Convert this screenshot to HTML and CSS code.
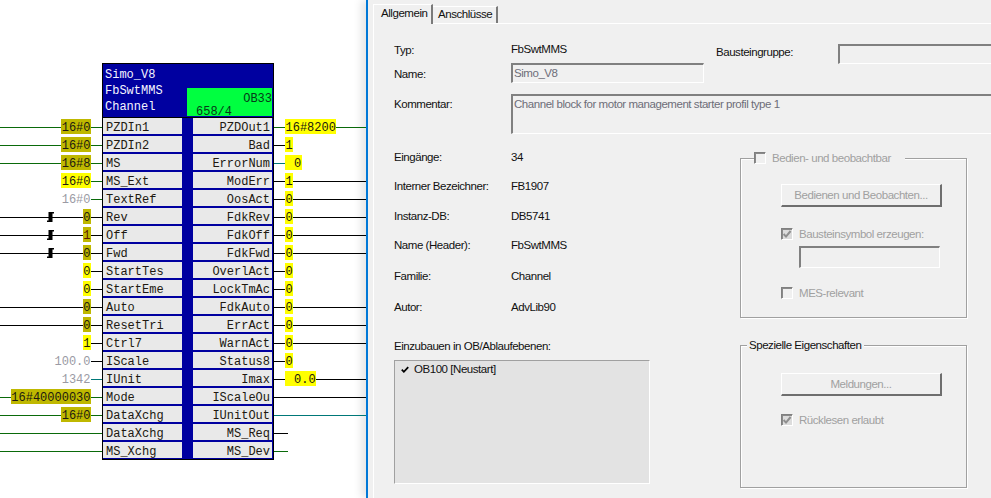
FILE: index.html
```html
<!DOCTYPE html>
<html lang="de">
<head>
<meta charset="utf-8">
<title>FbSwtMMS</title>
<link rel="stylesheet" href="styles.css">
</head>
<body>
<div class="page">
  <section class="diagram">
    <div class="pins pins-in">
      <div class="pin full green"><span class="tag olive">16#0</span></div>
      <div class="pin full green"><span class="tag olive">16#0</span></div>
      <div class="pin full green"><span class="tag olive">16#8</span></div>
      <div class="pin stub green"><span class="tag yellow">16#0</span></div>
      <div class="pin stub green"><span class="tag grey">16#0</span></div>
      <div class="pin full black"><svg class="mark" viewBox="0 0 7 10"><path d="M0 10V8.5H1.5V0H7V1.5H5.5V10Z"/></svg><span class="tag olive">0</span></div>
      <div class="pin full black"><svg class="mark" viewBox="0 0 7 10"><path d="M0 10V8.5H1.5V0H7V1.5H5.5V10Z"/></svg><span class="tag olive red">1</span></div>
      <div class="pin full black"><svg class="mark" viewBox="0 0 7 10"><path d="M0 10V8.5H1.5V0H7V1.5H5.5V10Z"/></svg><span class="tag olive">0</span></div>
      <div class="pin stub black"><span class="tag yellow">0</span></div>
      <div class="pin stub black"><span class="tag yellow">0</span></div>
      <div class="pin full black"><span class="tag olive">0</span></div>
      <div class="pin full black"><span class="tag olive">0</span></div>
      <div class="pin stub black"><span class="tag yellow">1</span></div>
      <div class="pin stub black"><span class="tag grey">100.0</span></div>
      <div class="pin stub teal"><span class="tag grey">1342</span></div>
      <div class="pin full green"><span class="tag olive">16#40000030</span></div>
      <div class="pin full green"><span class="tag olive">16#0</span></div>
      <div class="pin full green"></div>
      <div class="pin full green"></div>
    </div>

    <div class="block">
      <header class="block-head">
        <div class="block-title">
          <div>Simo_V8</div>
          <div>FbSwtMMS</div>
          <div>Channel</div>
        </div>
        <div class="block-run">
          <div class="run-ob">OB33</div>
          <div class="run-seq">658/4</div>
        </div>
      </header>
      <div class="block-body">
        <div class="cell">PZDIn1</div><div class="cell right">PZDOut1</div>
        <div class="cell">PZDIn2</div><div class="cell right">Bad</div>
        <div class="cell">MS</div><div class="cell right">ErrorNum</div>
        <div class="cell">MS_Ext</div><div class="cell right">ModErr</div>
        <div class="cell">TextRef</div><div class="cell right">OosAct</div>
        <div class="cell">Rev</div><div class="cell right">FdkRev</div>
        <div class="cell">Off</div><div class="cell right">FdkOff</div>
        <div class="cell">Fwd</div><div class="cell right">FdkFwd</div>
        <div class="cell">StartTes</div><div class="cell right">OverlAct</div>
        <div class="cell">StartEme</div><div class="cell right">LockTmAc</div>
        <div class="cell">Auto</div><div class="cell right">FdkAuto</div>
        <div class="cell">ResetTri</div><div class="cell right">ErrAct</div>
        <div class="cell">Ctrl7</div><div class="cell right">WarnAct</div>
        <div class="cell">IScale</div><div class="cell right">Status8</div>
        <div class="cell">IUnit</div><div class="cell right">Imax</div>
        <div class="cell">Mode</div><div class="cell right">IScaleOu</div>
        <div class="cell">DataXchg</div><div class="cell right">IUnitOut</div>
        <div class="cell">DataXchg</div><div class="cell right">MS_Req</div>
        <div class="cell">MS_Xchg</div><div class="cell right">MS_Dev</div>
      </div>
    </div>

    <div class="pins pins-out">
      <div class="pin full green"><span class="tag yellow">16#8200</span></div>
      <div class="pin stub black"><span class="tag yellow">1</span></div>
      <div class="pin stub teal"><span class="tag yellow indent">0</span></div>
      <div class="pin full black"><span class="tag yellow">1</span></div>
      <div class="pin full black"><span class="tag yellow">0</span></div>
      <div class="pin full black"><span class="tag yellow">0</span></div>
      <div class="pin full black"><span class="tag yellow">0</span></div>
      <div class="pin full black"><span class="tag yellow">0</span></div>
      <div class="pin stub black"><span class="tag yellow">0</span></div>
      <div class="pin stub black"><span class="tag yellow">0</span></div>
      <div class="pin full black"><span class="tag yellow">0</span></div>
      <div class="pin full black"><span class="tag yellow">0</span></div>
      <div class="pin full black"><span class="tag yellow">0</span></div>
      <div class="pin stub black"><span class="tag yellow">0</span></div>
      <div class="pin full black"><span class="tag yellow indent">0.0</span></div>
      <div class="pin full black"></div>
      <div class="pin full teal"></div>
      <div class="pin stub long black"></div>
      <div class="pin stub long green"></div>
    </div>
  </section>

  <section class="dialog">
    <nav class="tabs">
      <div class="tab active">Allgemein</div>
      <div class="tab">Anschlüsse</div>
    </nav>
    <div class="panel">
      <div class="head-grid">
        <div class="label">Typ:</div>
        <div class="value type-value">FbSwtMMS</div>
        <div class="label group-label">Bausteingruppe:</div>
        <div class="input group-input"></div>
        <div class="label name-label">Name:</div>
        <div class="input name-input">Simo_V8</div>
        <div class="label comment-label">Kommentar:</div>
        <div class="input comment-input">Channel block for motor management starter profil type 1</div>
      </div>

      <div class="lower">
        <div class="left-col">
          <div class="info-grid">
            <div class="label">Eingänge:</div><div class="value">34</div>
            <div class="label">Interner Bezeichner:</div><div class="value">FB1907</div>
            <div class="label">Instanz-DB:</div><div class="value">DB5741</div>
            <div class="label">Name (Header):</div><div class="value">FbSwtMMS</div>
            <div class="label">Familie:</div><div class="value">Channel</div>
            <div class="label">Autor:</div><div class="value">AdvLib90</div>
          </div>
          <div class="label list-label">Einzubauen in OB/Ablaufebenen:</div>
          <div class="listbox">
            <div class="list-item">
              <svg class="list-tick" viewBox="0 0 9 8"><path d="M0.8 4.2 3.2 6.6 8.2 1.2" fill="none" stroke="#000" stroke-width="2"/></svg>
              <span>OB100 [Neustart]</span>
            </div>
          </div>
        </div>

        <div class="right-col">
          <div class="groupbox box-operate">
            <div class="legend legend-check">
              <span class="check"></span>
              <span class="disabled">Bedien- und beobachtbar</span>
            </div>
            <div class="group-content">
              <div class="button">Bedienen und Beobachten...</div>
              <div class="check-row row-symbol">
                <span class="check on"><svg viewBox="0 0 10 10"><path d="M1.6 5 4 7.6 8.6 2" fill="none" stroke="#8f8f8f" stroke-width="2"/></svg></span>
                <span class="disabled">Bausteinsymbol erzeugen:</span>
              </div>
              <div class="input symbol-input"></div>
              <div class="check-row row-mes">
                <span class="check"></span>
                <span class="disabled">MES-relevant</span>
              </div>
            </div>
          </div>

          <div class="groupbox box-special">
            <div class="legend legend-text">Spezielle Eigenschaften</div>
            <div class="group-content">
              <div class="button">Meldungen...</div>
              <div class="check-row row-read">
                <span class="check on"><svg viewBox="0 0 10 10"><path d="M1.6 5 4 7.6 8.6 2" fill="none" stroke="#8f8f8f" stroke-width="2"/></svg></span>
                <span class="disabled">Rücklesen erlaubt</span>
              </div>
            </div>
          </div>
        </div>
      </div>
    </div>
  </section>
</div>
</body>
</html>
```

FILE: styles.css
```css
* { box-sizing: border-box; }

html, body {
  margin: 0;
  height: 498px;
  overflow: hidden;
  background: #fff;
}

.page {
  display: flex;
  width: 991px;
  height: 498px;
  overflow: hidden;
}

/* ---------- function block diagram ---------- */
.diagram {
  flex: none;
  width: 366px;
  display: flex;
  padding-top: 63px;
  font: 12px/15px "Liberation Mono", monospace;
  color: #201810;
}

.pins { flex: none; padding-top: 55px; }
.pins-in { width: 102px; }
.pins-out { width: 92px; }

.pin {
  position: relative;
  height: 18px;
  display: flex;
  padding-top: 1px;
  align-items: flex-start;
}
.pins-in .pin { justify-content: flex-end; padding-right: 11px; }
.pins-out .pin { justify-content: flex-start; padding-left: 11px; }

.pin::before {
  content: "";
  position: absolute;
  top: 9px;
  height: 1px;
  background: currentColor;
}
.pins-in .pin::before { right: 0; }
.pins-out .pin::before { left: 0; }
.pin.full::before { left: 0; right: 0; }
.pin.stub::before { width: 11px; }
.pin.stub.long::before { width: 14px; }
.pin.green { color: #0a6a0a; }
.pin.black { color: #000; }
.pin.teal { color: #007878; }

.tag {
  position: relative;
  height: 15px;
  padding: 0 .5px;
  line-height: 18px;
  color: #201810;
  white-space: pre;
}
.tag.olive { background: #bfb800; }
.tag.yellow { background: #ffff00; }
.tag.grey { background: #fff; color: #9a9aa4; }
.tag.red { color: #5a1a00; }
.tag.indent { padding-left: 9px; }

.mark {
  position: absolute;
  left: 47px;
  top: 4px;
  width: 7px;
  height: 10px;
  fill: #000;
}

.block {
  flex: none;
  width: 172px;
  height: 397px;
  border: 1px solid #000;
  background: #0000a0;
}

.block-head {
  height: 54px;
  display: flex;
  justify-content: space-between;
  align-items: flex-end;
  border-bottom: 1px solid #000;
  padding-bottom: 1px;
}

.block-title {
  padding: 3px 0 0 2px;
  color: #f4f4ff;
  line-height: 16px;
  align-self: flex-start;
}

.block-run {
  width: 85px;
  height: 28px;
  margin-right: 1px;
  background: #00ff40;
  color: #063a18;
  line-height: 14px;
}
.run-ob { text-align: right; margin-top: 4px; }
.run-seq { padding-left: 9px; margin-top: -1px; }

.block-body {
  display: grid;
  grid-template-columns: 79px 79px;
  grid-auto-rows: 16px;
  row-gap: 2px;
  column-gap: 11px;
}

.cell {
  background: #e9e9e9;
  padding-left: 3px;
  line-height: 20px;
}
.cell.right {
  text-align: right;
  padding: 0 2px 0 0;
}

/* ---------- properties dialog ---------- */
.dialog {
  flex: none;
  width: 640px;
  height: 498px;
  background: #f0f0f0;
  border-left: 2px solid #0078d7;
  box-shadow: -5px 0 8px rgba(0, 0, 0, .1);
  font: 11.5px/14px "Liberation Sans", Arial, sans-serif;
  letter-spacing: -.45px;
  color: #111;
  padding: 4px 0 0 5px;
}

.tabs {
  display: flex;
  align-items: flex-end;
  height: 19px;
}

.tab {
  height: 17px;
  padding: 0 0 0 5px;
  width: 65px;
  background: #f0f0f0;
  border-top: 1px solid #fff;
  border-right: 2px solid #7a7a7a;
}
.tab.active {
  height: 20px;
  width: 60px;
  padding: 1px 0 0 7px;
  border-left: 1px solid #fff;
  position: relative;
  z-index: 1;
  margin-bottom: -1px;
}

.panel {
  height: 480px;
  border-top: 1px solid #fff;
  border-left: 1px solid #fff;
  padding: 20px 0 0 20px;
}

.head-grid {
  display: grid;
  grid-template-columns: 117px 205px 122px 1fr;
  grid-template-rows: 19px 20px 40px;
}

.label, .value { line-height: 14px; margin-top: -1px; }
.type-value { margin-top: -2px; }
.group-label { padding-top: 2px; }
.name-label { grid-column: 1; padding-top: 5px; }
.name-input { grid-column: 2; width: 193px; padding-top: 0; line-height: 13px; }
.comment-label { grid-column: 1; margin-top: 14px; }
.comment-input { grid-column: 2 / 5; height: 40px; margin-top: 11px; padding-top: 0; }

.input {
  border-style: solid;
  border-width: 2px 1px 1px 2px;
  border-color: #808080 #fff #fff #808080;
  background: #f0f0f0;
  color: #6d6d78;
  padding: 1px 0 0 1px;
  line-height: 14px;
}
.group-input { height: 20px; }

.lower {
  display: flex;
  margin-top: 28px;
  align-items: flex-start;
}

.left-col { flex: none; width: 346px; }

.info-grid {
  display: grid;
  grid-template-columns: 117px auto;
  grid-template-rows: 29px 30px 29px 31px 31px 39px;
}

.list-label { height: 14px; margin-bottom: 7px; }

.listbox {
  width: 256px;
  height: 124px;
  background: #e3e3e3;
  border-style: solid;
  border-width: 1px;
  border-color: #a0a0a0 #fff #fff #a0a0a0;
  padding: 1px 0 0 6px;
}

.list-item { display: flex; align-items: center; gap: 5px; color: #111; }
.list-tick { width: 8px; height: 7px; flex: none; }

.right-col { flex: none; width: 227px; margin-top: 7px; }

.groupbox {
  border: 1px solid #a0a0a0;
  box-shadow: 1px 1px 0 #fff, inset 1px 1px 0 #fff;
}
.box-operate { height: 160px; }
.box-special { height: 143px; margin-top: 27px; }

.legend {
  display: flex;
  align-items: center;
  width: fit-content;
  background: #f0f0f0;
  height: 14px;
}
.legend-check {
  margin: -8px 0 0 13px;
  padding-right: 14px;
  gap: 6px;
}
.legend-text {
  margin: -8px 0 0 6px;
  padding: 0 3px 0 2px;
}

.group-content { padding: 0 0 0 40px; }

.disabled { color: #a0a0a0; }

.button {
  width: 161px;
  height: 23px;
  border-style: solid;
  border-width: 1px 2px 2px 1px;
  border-color: #fff #6e6e6e #6e6e6e #fff;
  background: #f0f0f0;
  color: #a0a0a0;
  text-align: center;
  line-height: 20px;
}
.box-operate .button { margin-top: 19px; }
.box-special .button { margin-top: 21px; }

.check-row { display: flex; align-items: center; gap: 6px; height: 14px; }
.row-symbol { margin-top: 20px; }
.symbol-input { width: 141px; height: 22px; margin: 5px 0 0 18px; }
.row-mes { margin-top: 18px; }
.row-read { margin-top: 17px; }

.check {
  flex: none;
  display: block;
  width: 12px;
  height: 12px;
  border-style: solid;
  border-width: 1px;
  border-color: #808080 #fff #fff #808080;
  box-shadow: inset 1px 1px 0 #8a8a8a;
  background: #f0f0f0;
}
.check.on { background: #dcdcdc; }
.check svg { display: block; width: 10px; height: 10px; }
```
